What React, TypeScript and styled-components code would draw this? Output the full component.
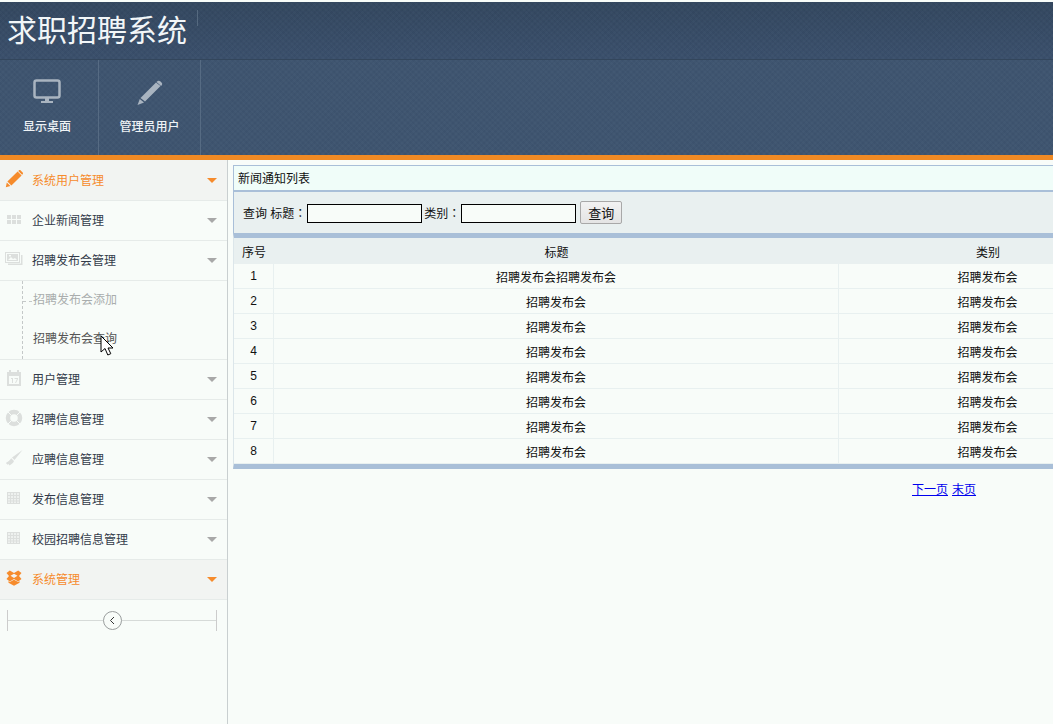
import { ReactNode } from 'react'
import styled, { createGlobalStyle } from 'styled-components'

const GlobalStyle = createGlobalStyle`
  html, body {
    margin: 0;
    padding: 0;
    height: 100%;
    overflow: hidden;
    background: #f8fcf9;
  }
  body, input, button {
    font-family: "Liberation Sans", "Noto Sans CJK SC", sans-serif;
    font-size: 12px;
    color: #111;
  }
`

const texture = `
  repeating-linear-gradient(45deg, rgba(255,255,255,.012) 0 2px, rgba(0,0,0,.012) 2px 4px),
  repeating-linear-gradient(-45deg, rgba(255,255,255,.01) 0 2px, rgba(0,0,0,.01) 2px 4px)
`

const Page = styled.div`
  position: relative;
  width: 1053px;
  height: 724px;
  overflow: hidden;
  display: flex;
  flex-direction: column;
`

const TitleBar = styled.header`
  height: 58px;
  margin-top: 2px;
  flex: none;
  display: flex;
  align-items: center;
  padding-left: 7px;
  background: ${texture}, linear-gradient(#33475f, #3a4f6b);
  border-bottom: 1px solid #33465c;
  box-sizing: border-box;
`

const Brand = styled.h1`
  margin: 0;
  font-size: 30px;
  font-weight: 400;
  line-height: 56px;
  color: #f2f6f8;
`

const BrandRule = styled.span`
  width: 1px;
  height: 16px;
  margin: -26px 0 0 10px;
  background: #55697f;
`

const Toolbar = styled.nav`
  height: 95px;
  flex: none;
  display: flex;
  background: ${texture}, #3e546f;
`

const ToolButton = styled.div<{ $width: number; $inset?: number }>`
  width: ${(p) => p.$width}px;
  box-sizing: border-box;
  border-right: 1px solid #566b83;
  padding-right: ${(p) => p.$inset ?? 0}px;
  display: flex;
  flex-direction: column;
  align-items: center;
  padding-top: 17px;
  color: #eef2f5;
  svg {
    display: block;
    height: 30px;
  }
`

const ToolLabel = styled.span`
  margin-top: 12px;
  line-height: 16px;
  font-weight: 500;
`

const OrangeStrip = styled.div`
  height: 5px;
  flex: none;
  background: #f08a24;
`

const Body = styled.div`
  flex: 1;
  display: flex;
  min-height: 0;
`

const Sidebar = styled.aside`
  width: 228px;
  flex: none;
  box-sizing: border-box;
  border-right: 1px solid #c9cfd0;
`

const MenuRow = styled.div<{ $active?: boolean }>`
  height: 40px;
  box-sizing: border-box;
  display: flex;
  align-items: center;
  padding: 0 10px 3px 5px;
  border-bottom: 1px solid #e6ebe9;
  background: ${(p) => (p.$active ? '#f2f4f2' : 'transparent')};
  color: ${(p) => (p.$active ? '#f68b2c' : '#333b4a')};
  &:first-child {
    height: 41px;
    padding-bottom: 2px;
  }
`

const MenuIcon = styled.span`
  width: 18px;
  height: 18px;
  margin-right: 9px;
  flex: none;
  svg {
    display: block;
  }
`

const MenuText = styled.span`
  flex: 1;
`

const Caret = styled.i<{ $active?: boolean }>`
  width: 0;
  height: 0;
  margin-top: 3px;
  border-left: 5px solid transparent;
  border-right: 5px solid transparent;
  border-top: 5px solid ${(p) => (p.$active ? '#f68b2c' : '#a8a8a8')};
`

const SubWrap = styled.div`
  border-bottom: 1px solid #e6ebe9;
`

const SubMenu = styled.div`
  height: 78px;
  margin-left: 22px;
  border-left: 1px dashed #c4c8c8;
  box-sizing: border-box;
`

const SubItem = styled.div<{ $muted?: boolean }>`
  height: 39px;
  line-height: 39px;
  padding-left: 10px;
  color: ${(p) => (p.$muted ? '#a9adad' : '#555')};
  position: relative;
  &::before {
    content: ${(p) => (p.$muted ? '""' : 'none')};
    position: absolute;
    left: 0;
    top: 20px;
    width: 9px;
    border-top: 1px dashed #c4c8c8;
  }
`

const Collapse = styled.div`
  margin: 10px 10px 0 7px;
  height: 21px;
  border-left: 1px solid #ccc;
  border-right: 1px solid #ccc;
  display: flex;
  align-items: center;
  justify-content: center;
  position: relative;
  &::before {
    content: '';
    position: absolute;
    left: 0;
    right: 0;
    top: 10px;
    border-top: 1px solid #d6dad8;
  }
`

const CollapseButton = styled.span`
  position: relative;
  width: 17px;
  height: 17px;
  border: 1px solid #9a9e9e;
  border-radius: 50%;
  background: #f8fcf9;
  display: flex;
  align-items: center;
  justify-content: center;
`

const Main = styled.main`
  flex: none;
  width: 904px;
  margin: 5px 0 0 5px;
`

const PanelTitle = styled.div`
  height: 27px;
  box-sizing: border-box;
  padding: 0 0 0 4px;
  line-height: 26px;
  border-top: 1px solid #a9bfd8;
  border-left: 1px solid #a9bfd8;
  border-bottom: 2px solid #a9bfd8;
  background: #f0fdf9;
`

const SearchBar = styled.form`
  height: 41px;
  box-sizing: border-box;
  margin: 0;
  display: flex;
  align-items: center;
  padding-left: 9px;
  border-left: 1px solid #a9bfd8;
  background: #e9f0f0;
  font-family: "Liberation Sans", "Noto Sans CJK TC", sans-serif;
  white-space: pre;
`

const SearchInput = styled.input`
  width: 115px;
  height: 19px;
  box-sizing: border-box;
  padding: 0 2px;
  margin: 1px 2px 0 1px;
  border: 1px solid #000;
  background: #f8fcf9;
`

const SearchButton = styled.button`
  width: 42px;
  height: 23px;
  margin-left: 2px;
  padding: 0;
  border: 1px solid #a8a8a8;
  border-radius: 2px;
  background: linear-gradient(#f2f2f2, #e4e4e4);
  font-size: 13px;
`

const Grid = styled.table`
  width: 100%;
  table-layout: fixed;
  border-collapse: separate;
  border-spacing: 0;
  border-top: 5px solid #a9bfd8;
  border-bottom: 5px solid #a9bfd8;
  border-left: 1px solid #dce6ea;
`

const HeadCell = styled.th<{ $width: number }>`
  width: ${(p) => p.$width}px;
  height: 26px;
  padding: 0;
  font-weight: 400;
  background: #e9f0f0;
  text-align: center;
`

const Cell = styled.td`
  height: 24px;
  padding: 0;
  text-align: center;
  border-right: 1px solid #e8f0f0;
  border-bottom: 1px solid #e8f0f0;
`

const Pager = styled.div`
  margin: 13px 0 0 679px;
  line-height: 16px;
  a {
    color: #00e;
    margin-right: 4px;
  }
`

const Cursor = styled.svg`
  position: absolute;
  left: 100px;
  top: 335px;
`

const PencilIcon = ({ color }: { color: string }) => (
  <svg width="18" height="18" viewBox="0 0 18 18">
    <path fill={color} d="M12.6 1.4 16.6 5.4 6.4 15.4 2.4 11.4ZM1.8 12.4 5.4 16 .8 17.2Z" />
    <path fill={color} d="M13.8.4c.6-.5 1.400-.5 1.900 0l2 2c.4.500.4 1.300 0 1.800l-.6.600-3.900-3.900Z" />
  </svg>
)

const GREY = '#dcdfdd'

const DotsIcon = () => (
  <svg width="18" height="18" viewBox="0 0 18 18" fill={GREY}>
    {[2, 7, 12].map((x) =>
      [5, 10].map((y) => <rect key={`${x}-${y}`} x={x} y={y} width="4" height="4" />)
    )}
  </svg>
)

const PictureIcon = () => (
  <svg width="18" height="18" viewBox="0 0 18 18">
    <rect x=".5" y="2.500" width="14" height="10" fill="none" stroke={GREY} />
    <path fill={GREY} d="M2 4h11v7H2zM16 5h1.500v10H3v-1.500h13z" />
    <path fill="#f8fcf9" d="m3 10 3-3 2 2 2-1 2 2zM4 5h2v1.500H4z" />
  </svg>
)

const CalendarIcon = () => (
  <svg width="18" height="18" viewBox="0 0 18 18">
    <path fill={GREY} d="M2 3h2V1h2v2h6V1h2v2h2v14H2Z" />
    <rect x="4" y="7" width="10" height="8" fill="#f8fcf9" />
    <path fill={GREY} d="M6 9h2v5H7v-4H6zM9.500 9H13v1l-2 4h-1l2-4H9.500z" />
  </svg>
)

const BuoyIcon = () => (
  <svg width="18" height="18" viewBox="0 0 18 18">
    <circle cx="9" cy="9" r="6" fill="none" stroke={GREY} strokeWidth="4.500" />
    <path stroke="#f8fcf9" strokeWidth="1" d="M3 3l3.500 3.500M15 3l-3.500 3.500M3 15l3.500-3.500M15 15l-3.500-3.500" />
  </svg>
)

const BrushIcon = () => (
  <svg width="18" height="18" viewBox="0 0 18 18">
    <path fill={GREY} d="M17.500 1 9.500 11 7 8.500ZM6.200 9.300 9 12c-.8 2-2.500 3.400-4.500 4.500L3.500 15l-.8.800L.8 14C3 13 4.800 11.200 6.200 9.300Z" />
  </svg>
)

const TableIcon = () => (
  <svg width="18" height="18" viewBox="0 0 18 18">
    <rect x="2.500" y="3.500" width="12" height="11" fill="#eef1ef" stroke={GREY} />
    <path stroke={GREY} strokeWidth="1" d="M5.500 4v10M8.500 4v10M11.500 4v10M3 6.500h11M3 9.500h11M3 12h11" />
  </svg>
)

const BoxIcon = ({ color }: { color: string }) => (
  <svg width="18" height="18" viewBox="0 0 18 18" fill={color}>
    <path d="M4.800 1.500 9 4 13.200 1.500 16.500 4 14 7 16.500 10 13.200 12.500 9 10 4.800 12.500 1.500 10 4 7 1.500 4ZM5.500 6.800 9 9 12.500 6.800 9 4.800Z" />
    <path d="M3.500 12 4.800 13 9 10.800 13.200 13 14.500 12V13.800L9 16.800 3.500 13.800Z" />
  </svg>
)

interface MenuEntry {
  label: string
  icon: ReactNode
  active?: boolean
}

const topMenu: MenuEntry[] = [
  { label: '系统用户管理', icon: <PencilIcon color="#f68b2c" />, active: true },
  { label: '企业新闻管理', icon: <DotsIcon /> },
  { label: '招聘发布会管理', icon: <PictureIcon /> },
]

const bottomMenu: MenuEntry[] = [
  { label: '用户管理', icon: <CalendarIcon /> },
  { label: '招聘信息管理', icon: <BuoyIcon /> },
  { label: '应聘信息管理', icon: <BrushIcon /> },
  { label: '发布信息管理', icon: <TableIcon /> },
  { label: '校园招聘信息管理', icon: <TableIcon /> },
  { label: '系统管理', icon: <BoxIcon color="#f68b2c" />, active: true },
]

const rows = [
  '招聘发布会招聘发布会',
  '招聘发布会',
  '招聘发布会',
  '招聘发布会',
  '招聘发布会',
  '招聘发布会',
  '招聘发布会',
  '招聘发布会',
]

const renderMenu = (items: MenuEntry[]) =>
  items.map((item) => (
    <MenuRow key={item.label} $active={item.active}>
      <MenuIcon>{item.icon}</MenuIcon>
      <MenuText>{item.label}</MenuText>
      <Caret $active={item.active} />
    </MenuRow>
  ))

const App = () => (
  <Page>
    <GlobalStyle />
    <TitleBar>
      <Brand>求职招聘系统</Brand>
      <BrandRule />
    </TitleBar>
    <Toolbar>
      <ToolButton $width={99} $inset={4}>
        <svg width="28" height="26" viewBox="0 0 28 26">
          <rect x="1.500" y="1.500" width="25" height="17" rx="2" fill="none" stroke="#a9b4c0" strokeWidth="2.500" />
          <path fill="#a9b4c0" d="M12 19h4v3h4v2H8v-2h4z" />
        </svg>
        <ToolLabel>显示桌面</ToolLabel>
      </ToolButton>
      <ToolButton $width={102}>
        <svg width="28" height="26" viewBox="0 0 28 26">
          <path fill="#a9b4c0" d="M20 3.500 24.500 7 9 22.500 4.500 19ZM3.800 20 8 23.500 1.500 26Z" />
          <path fill="#a9b4c0" d="M21 2.500c1-1 2.300-1 3.200-.2l1.300 1.200c.9.900.9 2.100 0 3l-.4.400L20.500 3Z" />
        </svg>
        <ToolLabel>管理员用户</ToolLabel>
      </ToolButton>
    </Toolbar>
    <OrangeStrip />
    <Body>
      <Sidebar>
        {renderMenu(topMenu)}
        <SubWrap>
          <SubMenu>
            <SubItem $muted>招聘发布会添加</SubItem>
            <SubItem>招聘发布会查询</SubItem>
          </SubMenu>
        </SubWrap>
        {renderMenu(bottomMenu)}
        <Collapse>
          <CollapseButton>
            <svg width="7" height="9" viewBox="0 0 7 9">
              <path d="M5 1 1.500 4.500 5 8" fill="none" stroke="#333" />
            </svg>
          </CollapseButton>
        </Collapse>
      </Sidebar>
      <Main>
        <PanelTitle>新闻通知列表</PanelTitle>
        <SearchBar>
          查询 标题：
          <SearchInput />
          类别：
          <SearchInput />
          <SearchButton type="button">查询</SearchButton>
        </SearchBar>
        <Grid>
          <thead>
            <tr>
              <HeadCell $width={40}>序号</HeadCell>
              <HeadCell $width={565}>标题</HeadCell>
              <HeadCell $width={298}>类别</HeadCell>
            </tr>
          </thead>
          <tbody>
            {rows.map((title, i) => (
              <tr key={i}>
                <Cell>{i + 1}</Cell>
                <Cell>{title}</Cell>
                <Cell>招聘发布会</Cell>
              </tr>
            ))}
          </tbody>
        </Grid>
        <Pager>
          <a href="#next">下一页</a>
          <a href="#last">末页</a>
        </Pager>
      </Main>
    </Body>
    <Cursor width="14" height="22" viewBox="0 0 14 22">
      <path d="M1 1v16l4-3.500 2.800 6.500 3-1.300L8 13h5Z" fill="#fff" stroke="#000" strokeWidth="1" />
    </Cursor>
  </Page>
)

export default App
